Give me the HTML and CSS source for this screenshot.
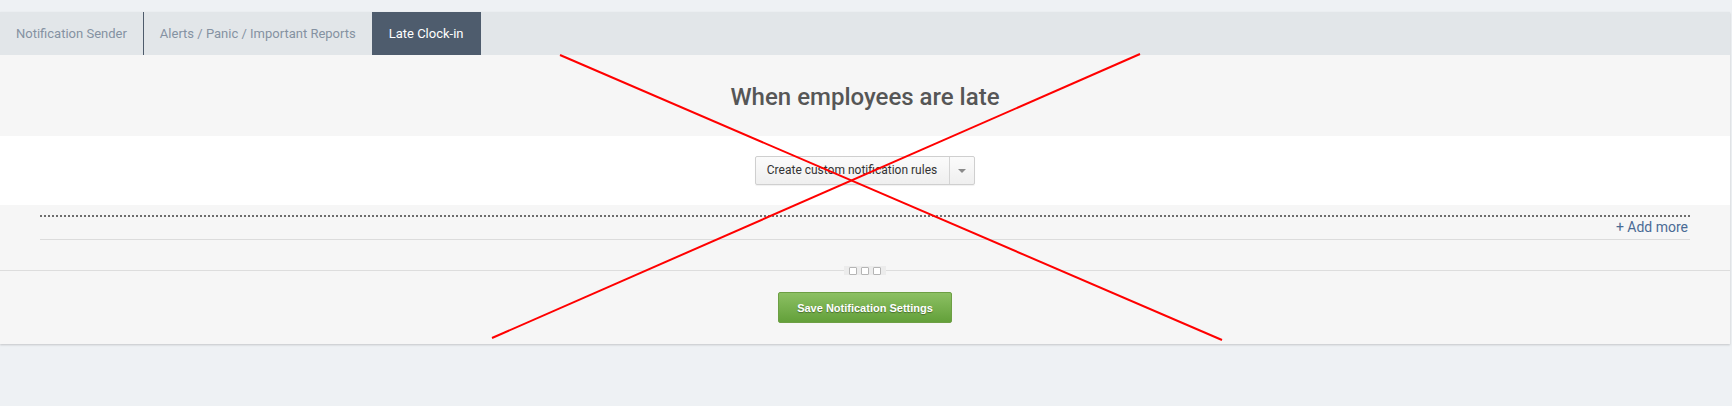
FILE: index.html
```html
<!DOCTYPE html>
<html>
<head>
<meta charset="utf-8">
<title>Late Clock-in</title>
<link rel="stylesheet" href="styles.css">
</head>
<body>
<div class="page">
  <div class="panel">
    <div class="tabs">
      <div class="tab tab-sep">Notification Sender</div>
      <div class="tab">Alerts / Panic / Important Reports</div>
      <div class="tab tab-active">Late Clock-in</div>
    </div>
    <div class="head">
      <h1 class="title">When employees are late</h1>
    </div>
    <div class="actions">
      <div class="split-btn">
        <span class="split-main">Create custom notification rules</span>
        <span class="split-caret"><span class="caret"></span></span>
      </div>
    </div>
    <div class="rules">
      <div class="rules-dotted"></div>
      <div class="rules-add"><a class="add-more">+ Add more</a></div>
    </div>
    <div class="footer">
      <div class="handle"><span class="hsq"></span><span class="hsq"></span><span class="hsq"></span></div>
      <button class="save-btn">Save Notification Settings</button>
    </div>
  </div>
  <svg class="xmark" width="1732" height="406" viewBox="0 0 1732 406">
    <line x1="560" y1="55" x2="1222" y2="340" stroke="#ff0000" stroke-width="2"/>
    <line x1="1140" y1="54" x2="492" y2="338" stroke="#ff0000" stroke-width="2"/>
  </svg>
</div>
</body>
</html>
```
FILE: styles.css
```css
html, body {
  margin: 0;
  padding: 0;
}
body {
  background: #eef1f4;
  font-family: Roboto, "Liberation Sans", Arial, sans-serif;
  width: 1732px;
  height: 406px;
  overflow: hidden;
}
.page {
  position: relative;
  padding-top: 12px;
}
.panel {
  width: 1730px;
  background: #f6f6f6;
  box-shadow: 0 1px 2px rgba(0, 0, 0, 0.18);
}
.tabs {
  display: flex;
  height: 43px;
  background: #e2e6e9;
}
.tab {
  padding: 0 16px 0 16px;
  line-height: 43px;
  font-size: 13px;
  color: #8592a2;
}
.tab-sep {
  border-right: 1px solid #4e5b6b;
}
.tab-active {
  background: #4e5c6d;
  color: #ffffff;
  padding: 0 17px;
}
.head {
  padding: 28px 0 24px;
  text-align: center;
}
.title {
  margin: 0;
  font-size: 24px;
  line-height: 29px;
  font-weight: 500;
  color: #565656;
}
.actions {
  background: #ffffff;
  padding: 20px 0 20px;
  display: flex;
  justify-content: center;
}
.split-btn {
  display: flex;
  height: 27px;
  border: 1px solid #cfcfcf;
  border-radius: 2px;
  background: linear-gradient(#fbfbfb, #efefef);
  box-shadow: 0 1px 1px rgba(0, 0, 0, 0.06);
}
.split-main {
  padding: 0 12px 0 11px;
  line-height: 27px;
  font-size: 12px;
  color: #333333;
  border-right: 1px solid #d4d4d4;
}
.split-caret {
  width: 24px;
  display: flex;
  align-items: center;
  justify-content: center;
}
.caret {
  width: 0;
  height: 0;
  border-left: 4px solid transparent;
  border-right: 4px solid transparent;
  border-top: 4px solid #8a8a8a;
}
.rules {
  padding: 10px 40px 30px;
  border-bottom: 1px solid #dddddd;
}
.rules-dotted {
  height: 2px;
  background: repeating-linear-gradient(to right, #6e6e6e 0, #6e6e6e 2px, transparent 2px, transparent 4px);
}
.rules-add {
  display: flex;
  justify-content: flex-end;
  padding-right: 2px;
  height: 22px;
  border-bottom: 1px solid #dcdcdc;
}
.add-more {
  font-size: 14px;
  line-height: 20px;
  color: #4a6b95;
  cursor: pointer;
}
.footer {
  position: relative;
  display: flex;
  justify-content: center;
  padding: 21px 0 21px;
}
.handle {
  position: absolute;
  top: -5px;
  left: 844px;
  width: 42px;
  height: 9px;
  background: #ececec;
  display: flex;
  justify-content: center;
  align-items: center;
  gap: 4px;
}
.hsq {
  width: 6px;
  height: 6px;
  background: #ffffff;
  border: 1px solid #b5b5b5;
  border-radius: 1px;
}
.save-btn {
  width: 174px;
  height: 31px;
  border: 1px solid #6d9f44;
  border-radius: 2px;
  background: linear-gradient(#8cc063, #63a03a);
  color: #ffffff;
  font-family: "Liberation Sans", Arial, sans-serif;
  font-size: 11px;
  font-weight: bold;
  text-shadow: 0 1px 1px rgba(0, 0, 0, 0.35);
  padding: 0;
}
.xmark {
  position: absolute;
  left: 0;
  top: 0;
  pointer-events: none;
}
```
